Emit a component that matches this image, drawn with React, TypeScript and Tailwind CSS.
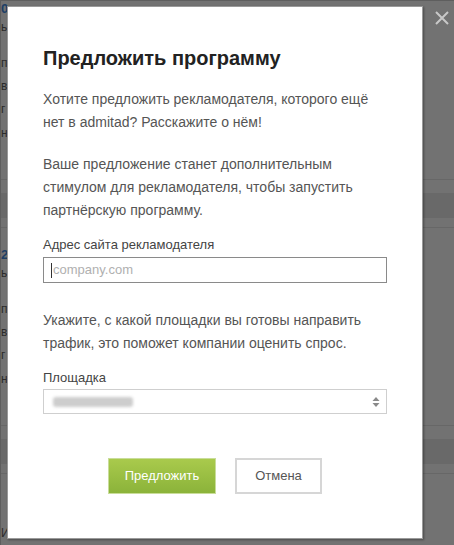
import React from "react";

const F = { fontFamily: '"Liberation Sans", Arial, sans-serif' };

function BgBlock({ num }: { num: string }) {
  return (
    <div className="flex flex-col">
      <div className="h-[20px] w-[7px] overflow-hidden text-[13px] font-bold leading-[20px] text-[#1d3f66] whitespace-nowrap">{num}</div>
      <div className="h-[160px] w-[7px] overflow-hidden flex flex-col text-[12px] leading-[12px] text-[#2b2b2b] whitespace-nowrap">
        <div className="mt-[2px]">ь</div>
        <div className="mt-[24px]">п</div>
        <div className="mt-[11px]">в</div>
        <div className="mt-[11px]">г</div>
        <div className="mt-[12px]">н</div>
      </div>
      <div className="h-[14px] border-t border-[#676767]" />
      <div className="h-[25px] bg-[#696969]" />
      <div className="h-[10px] border-b border-[#676767]" />
    </div>
  );
}

export default function App() {
  return (
    <div style={F} className="relative h-[545px] w-[454px] overflow-hidden bg-[#727272] border-l border-t border-[#5e5e5e]">
      <div className="-mt-[2px] flex flex-col">
        <BgBlock num="0" />
        <div className="h-[17px]" />
        <BgBlock num="2" />
        <div className="mt-[50px] w-[7px] overflow-hidden text-[12px] text-[#2b2b2b]">И</div>
      </div>

      <button className="absolute right-[4px] top-[9px] h-[16px] w-[16px]">
        <svg viewBox="0 0 16 16" className="h-[16px] w-[16px]">
          <path d="M2 2 L14 14 M14 2 L2 14" stroke="#c8c8c8" strokeWidth="2" />
        </svg>
      </button>

      <div className="absolute left-[6px] top-[5px] h-[533px] w-[416px] border border-[#9a9a9a] bg-white px-[35px] pt-[39px] shadow-[1px_1px_2px_rgba(0,0,0,0.35)]">
        <h2 className="text-[20px] font-bold leading-[24px] text-[#222]">Предложить программу</h2>
        <p className="mt-[18px] text-[14px] leading-[23px] text-[#555]">
          Хотите предложить рекламодателя, которого ещё
          <br />
          нет в admitad? Расскажите о нём!
        </p>
        <p className="mt-[19px] text-[14px] leading-[23px] text-[#555]">
          Ваше предложение станет дополнительным
          <br />
          стимулом для рекламодателя, чтобы запустить
          <br />
          партнёрскую программу.
        </p>
        <div className="mt-[15px] text-[13px] leading-[16px] text-[#444]">Адрес сайта рекламодателя</div>
        <div className="mt-[4px] flex h-[26px] w-full items-center border border-[#8a8a8a] pl-[7px] text-[13px] text-[#b0b0b0]">
          <span className="mr-[1px] inline-block h-[15px] w-px bg-[#333]" />
          company.com
        </div>
        <p className="mt-[26px] text-[14px] leading-[23px] text-[#555]">
          Укажите, с какой площадки вы готовы направить
          <br />
          трафик, это поможет компании оценить спрос.
        </p>
        <div className="mt-[15px] text-[13px] leading-[16px] text-[#444]">Площадка</div>
        <div className="mt-[3px] flex h-[25px] w-full items-center justify-between border border-[#cfcfcf] pl-[9px] pr-[6px]">
          <div className="h-[10px] w-[80px] rounded-[3px] bg-[#cdcdcd] blur-[1.5px]" />
          <svg viewBox="0 0 8 12" className="h-[12px] w-[8px]">
            <path d="M4 1 L7.5 5 L0.5 5 Z M4 11 L7.5 7 L0.5 7 Z" fill="#8a8a8a" />
          </svg>
        </div>
        <div className="mt-[44px] flex justify-center gap-[19px]">
          <button className="h-[36px] w-[108px] border border-[#c9dd9a] bg-gradient-to-b from-[#a9ca4c] to-[#8bb33a] text-[13px] text-white">
            Предложить
          </button>
          <button className="h-[36px] w-[87px] border-2 border-[#d6d6d6] bg-white text-[13px] text-[#555]">
            Отмена
          </button>
        </div>
      </div>
    </div>
  );
}
